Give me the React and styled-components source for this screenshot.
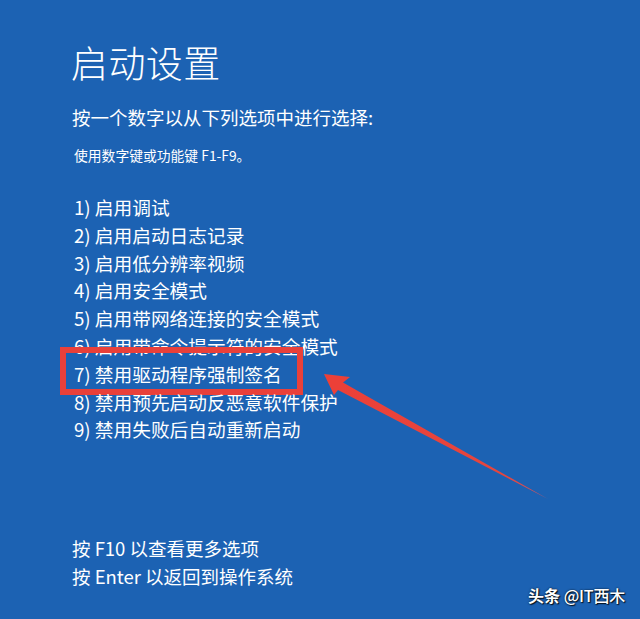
import React from 'react';
import styled, { createGlobalStyle } from 'styled-components';

const GlobalStyle = createGlobalStyle`
  html, body {
    margin: 0;
    padding: 0;
    background: #1c62b3;
  }
  *, *::before, *::after {
    box-sizing: border-box;
  }
`;

const Screen = styled.div`
  position: relative;
  width: 640px;
  height: 619px;
  overflow: hidden;
  background: #1c62b3;
  color: #ffffff;
  font-family: 'Segoe UI', 'Noto Sans CJK SC', 'Noto Sans', sans-serif;
  padding: 38px 0 0 71px;
`;

const Title = styled.h1`
  margin: 0;
  font-size: 37px;
  line-height: 48px;
  font-weight: 300;
  letter-spacing: 0.4px;
`;

const Prompt = styled.p`
  margin: ${props => props.gap}px 0 0 ${props => props.indent || 1}px;
  font-size: ${props => props.size}px;
  line-height: ${props => props.lineHeight}px;
  font-weight: 400;
`;

const OptionList = styled.ol`
  list-style: none;
  margin: 29px 0 0 3px;
  padding: 0;
`;

const Option = styled.li`
  position: relative;
  font-size: 18.7px;
  line-height: 27.8px;
  white-space: nowrap;

  ${props => props.marked && `
    &::after {
      content: '';
      position: absolute;
      left: -14px;
      top: -13px;
      width: 243px;
      height: 48px;
      border: 6px solid #e8403a;
    }
  `}
`;

const Footer = styled.div`
  margin: 91px 0 0 1px;
  font-size: 18.5px;
  line-height: 28px;
`;

const Watermark = styled.div`
  position: absolute;
  right: 15px;
  bottom: 12px;
  font-size: 16px;
  font-weight: 500;
  letter-spacing: -0.2px;
  font-family: 'Noto Sans CJK SC', 'Noto Sans', sans-serif;
  text-shadow: 0 0 2px rgba(0, 0, 0, 0.9), 1px 1px 1px rgba(0, 0, 0, 0.8);
`;

const Brand = styled.span`
  font-weight: 700;
  margin-right: 4px;
`;

const ArrowLayer = styled.svg`
  position: absolute;
  left: 0;
  top: 0;
  pointer-events: none;
`;

const options = [
  '1) 启用调试',
  '2) 启用启动日志记录',
  '3) 启用低分辨率视频',
  '4) 启用安全模式',
  '5) 启用带网络连接的安全模式',
  '6) 启用带命令提示符的安全模式',
  '7) 禁用驱动程序强制签名',
  '8) 禁用预先启动反恶意软件保护',
  '9) 禁用失败后自动重新启动',
];

const Arrow = () => (
  <ArrowLayer width="640" height="619" viewBox="0 0 640 619">
    <defs>
      <linearGradient id="shaft" x1="340" y1="386" x2="548" y2="499" gradientUnits="userSpaceOnUse">
        <stop offset="0" stopColor="#ec4038" />
        <stop offset="0.8" stopColor="#e4463f" />
        <stop offset="1" stopColor="#c9566a" />
      </linearGradient>
    </defs>
    <polygon points="324,374 350,377 343,382.5 548,499 338,390 334,395" fill="url(#shaft)" />
  </ArrowLayer>
);

export default function App() {
  return (
    <>
      <GlobalStyle />
      <Screen>
        <Title>启动设置</Title>
        <Prompt gap={19} size={18.5} lineHeight={24}>按一个数字以从下列选项中进行选择:</Prompt>
        <Prompt gap={17} size={13.8} lineHeight={18} indent={3}>使用数字键或功能键 F1-F9。</Prompt>
        <OptionList>
          {options.map((text, i) => (
            <Option key={text} marked={i === 6}>{text}</Option>
          ))}
        </OptionList>
        <Footer>
          <div>按 F10 以查看更多选项</div>
          <div>按 Enter 以返回到操作系统</div>
        </Footer>
        <Arrow />
        <Watermark><Brand>头条</Brand>@IT西木</Watermark>
      </Screen>
    </>
  );
}
